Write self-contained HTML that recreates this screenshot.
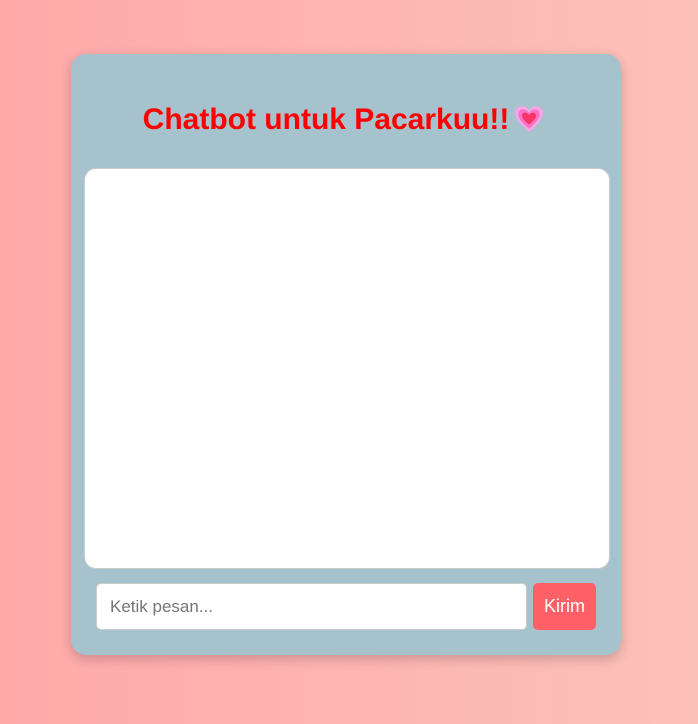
<!DOCTYPE html>
<html><head><meta charset="utf-8"><style>
html,body{margin:0;padding:0;width:698px;height:724px;overflow:hidden}
body{background:linear-gradient(90deg,#ffa9a9,#fcc1b9);font-family:"Liberation Sans",sans-serif;position:relative}
.card{position:absolute;left:71px;top:54px;width:550px;height:601px;background:#a5c2cd;border-radius:15px;box-shadow:0 4px 12px rgba(0,0,0,0.2)}
h1{position:absolute;left:0;right:0;top:103px;margin:0;padding-right:10px;text-align:center;color:#f00;font-size:30px;font-weight:bold;line-height:34px;white-space:nowrap}
.chat{position:absolute;left:84px;top:168px;width:524px;height:399px;background:#fff;border:1px solid #ccc;border-radius:12px}
.inp{position:absolute;left:96px;top:583px;background:#fff;border:1px solid #ccc;border-radius:5px;font-size:17px;color:#757575;line-height:45px;box-sizing:border-box;padding-left:13px;height:47px;width:431px}
.btn{position:absolute;left:533px;top:583px;width:63px;height:47px;background:#ff5f67;border-radius:5px;color:#fff;font-size:18px;line-height:47px;text-align:center}
</style></head><body>
<div class="card"></div>
<h1>Chatbot untuk Pacarkuu!!<svg width="32" height="30" viewBox="0 0 28 28" style="vertical-align:-5px;margin-left:4px"><path d="M14 26 C6 19 1 14 1 8.5 C1 4.5 4 2 7.5 2 C10.5 2 12.5 3.5 14 6 C15.5 3.5 17.5 2 20.5 2 C24 2 27 4.5 27 8.5 C27 14 22 19 14 26Z" fill="#f9a6e8"/><path d="M14 23 C8 18 4 14 4 9.5 C4 6.5 6 5 8.5 5 C11 5 12.8 6.5 14 8.5 C15.2 6.5 17 5 19.5 5 C22 5 24 6.5 24 9.5 C24 14 20 18 14 23Z" fill="#f774c4"/><path d="M14 19 C10 16 7.5 13.5 7.5 10.8 C7.5 9 8.8 8 10.3 8 C12 8 13.2 9 14 10.3 C14.8 9 16 8 17.7 8 C19.2 8 20.5 9 20.5 10.8 C20.5 13.5 18 16 14 19Z" fill="#f93466"/></svg></h1>
<div class="chat"></div>
<div class="inp">Ketik pesan...</div>
<div class="btn">Kirim</div>
</body></html>
